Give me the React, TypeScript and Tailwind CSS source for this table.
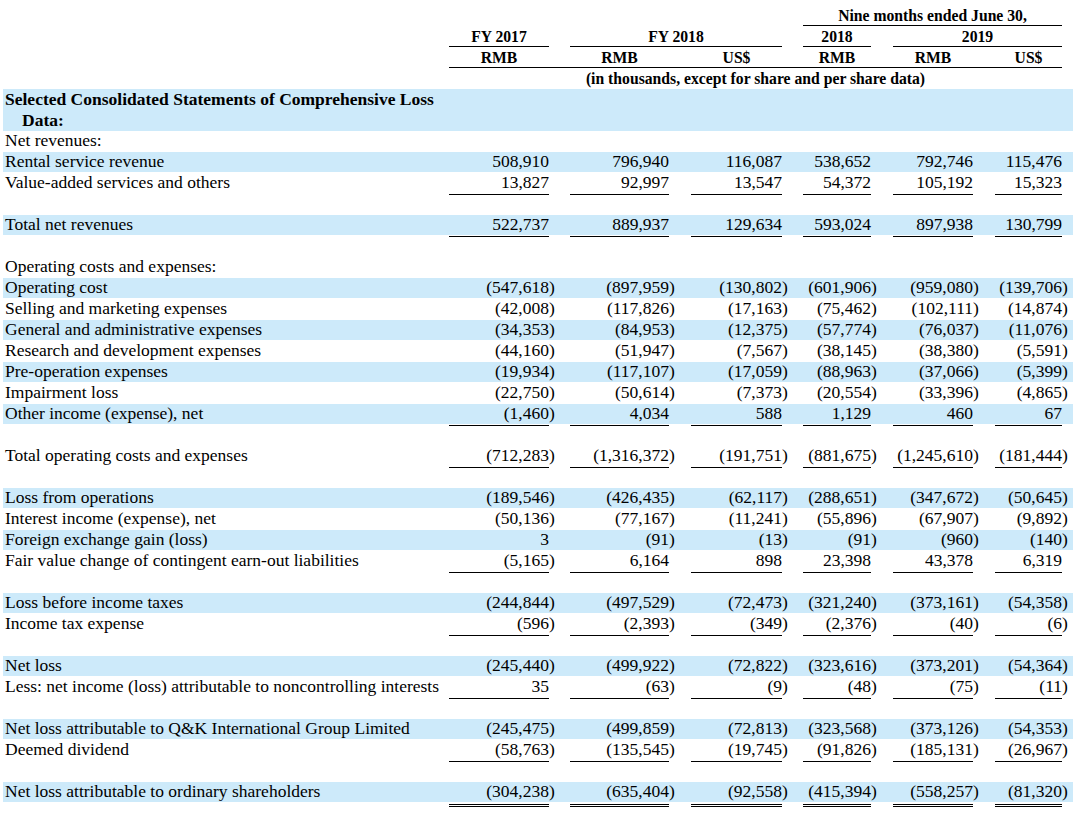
import React from "react";

type Row = {
  label: string;
  vals?: string[];
  shade?: boolean;
  full?: boolean;
  ul?: "single" | "double";
  bold?: boolean;
  indent?: boolean;
};

const rows: Row[] = [
  { label: "Selected Consolidated Statements of Comprehensive Loss", shade: true, full: true, bold: true },
  { label: "Data:", shade: true, full: true, bold: true, indent: true },
  { label: "Net revenues:" },
  { label: "Rental service revenue", shade: true, vals: ["508,910", "796,940", "116,087", "538,652", "792,746", "115,476"] },
  { label: "Value-added services and others", ul: "single", vals: ["13,827", "92,997", "13,547", "54,372", "105,192", "15,323"] },
  { label: "" },
  { label: "Total net revenues", shade: true, ul: "single", vals: ["522,737", "889,937", "129,634", "593,024", "897,938", "130,799"] },
  { label: "" },
  { label: "Operating costs and expenses:" },
  { label: "Operating cost", shade: true, vals: ["(547,618)", "(897,959)", "(130,802)", "(601,906)", "(959,080)", "(139,706)"] },
  { label: "Selling and marketing expenses", vals: ["(42,008)", "(117,826)", "(17,163)", "(75,462)", "(102,111)", "(14,874)"] },
  { label: "General and administrative expenses", shade: true, vals: ["(34,353)", "(84,953)", "(12,375)", "(57,774)", "(76,037)", "(11,076)"] },
  { label: "Research and development expenses", vals: ["(44,160)", "(51,947)", "(7,567)", "(38,145)", "(38,380)", "(5,591)"] },
  { label: "Pre-operation expenses", shade: true, vals: ["(19,934)", "(117,107)", "(17,059)", "(88,963)", "(37,066)", "(5,399)"] },
  { label: "Impairment loss", vals: ["(22,750)", "(50,614)", "(7,373)", "(20,554)", "(33,396)", "(4,865)"] },
  { label: "Other income (expense), net", shade: true, ul: "single", vals: ["(1,460)", "4,034", "588", "1,129", "460", "67"] },
  { label: "" },
  { label: "Total operating costs and expenses", ul: "single", vals: ["(712,283)", "(1,316,372)", "(191,751)", "(881,675)", "(1,245,610)", "(181,444)"] },
  { label: "" },
  { label: "Loss from operations", shade: true, vals: ["(189,546)", "(426,435)", "(62,117)", "(288,651)", "(347,672)", "(50,645)"] },
  { label: "Interest income (expense), net", vals: ["(50,136)", "(77,167)", "(11,241)", "(55,896)", "(67,907)", "(9,892)"] },
  { label: "Foreign exchange gain (loss)", shade: true, vals: ["3", "(91)", "(13)", "(91)", "(960)", "(140)"] },
  { label: "Fair value change of contingent earn-out liabilities", ul: "single", vals: ["(5,165)", "6,164", "898", "23,398", "43,378", "6,319"] },
  { label: "" },
  { label: "Loss before income taxes", shade: true, vals: ["(244,844)", "(497,529)", "(72,473)", "(321,240)", "(373,161)", "(54,358)"] },
  { label: "Income tax expense", ul: "single", vals: ["(596)", "(2,393)", "(349)", "(2,376)", "(40)", "(6)"] },
  { label: "" },
  { label: "Net loss", shade: true, vals: ["(245,440)", "(499,922)", "(72,822)", "(323,616)", "(373,201)", "(54,364)"] },
  { label: "Less: net income (loss) attributable to noncontrolling interests", ul: "single", vals: ["35", "(63)", "(9)", "(48)", "(75)", "(11)"] },
  { label: "" },
  { label: "Net loss attributable to Q&K International Group Limited", shade: true, vals: ["(245,475)", "(499,859)", "(72,813)", "(323,568)", "(373,126)", "(54,353)"] },
  { label: "Deemed dividend", ul: "single", vals: ["(58,763)", "(135,545)", "(19,745)", "(91,826)", "(185,131)", "(26,967)"] },
  { label: "" },
  { label: "Net loss attributable to ordinary shareholders", shade: true, ul: "double", vals: ["(304,238)", "(635,404)", "(92,558)", "(415,394)", "(558,257)", "(81,320)"] },
];

const cols = [
  { wrap: "flex w-[107px]", num: "w-[100px]" },
  { wrap: "flex ml-[14px] w-[106px]", num: "w-[99px]" },
  { wrap: "flex ml-[15px] w-[98px]", num: "w-[91px]" },
  { wrap: "flex ml-[14px] w-[75px]", num: "w-[68px]" },
  { wrap: "flex ml-[15px] w-[87px]", num: "w-[80px]" },
  { wrap: "flex ml-[15px] w-[74px]", num: "w-[67px]" },
];

function DataRow({ r }: { r: Row }) {
  const ulCls =
    r.ul === "double"
      ? "h-[25px] border-b-[3px] border-double border-black"
      : r.ul === "single"
      ? "h-[22px] border-b border-black"
      : "h-[20px]";
  return (
    <div className={`h-[21px] w-[1070px] ${r.shade && r.full ? "bg-[#cdeafa]" : ""}`}>
      <div className={`flex h-[20px] leading-[19px] ${r.shade && !r.full ? "bg-[#cdeafa]" : ""}`}>
        <div
          className={`w-[446px] shrink-0 whitespace-nowrap ${r.indent ? "pl-[19px]" : "pl-[2px]"} ${
            r.bold ? "font-bold" : ""
          } ${r.full ? "leading-[21px]" : ""}`}
        >
          {r.label}
        </div>
        {r.vals &&
          r.vals.map((v, i) => {
            const neg = v.endsWith(")");
            const body = neg ? v.slice(0, -1) : v;
            return (
              <div key={i} className={`${cols[i].wrap} shrink-0 self-start`}>
                <div className={`${cols[i].num} shrink-0 text-right whitespace-nowrap ${ulCls}`}>{body}</div>
                <div className="w-[7px] shrink-0 text-left">{neg ? ")" : ""}</div>
              </div>
            );
          })}
      </div>
    </div>
  );
}

export default function App() {
  return (
    <div className="w-[1080px] h-[817px] bg-white overflow-hidden text-black font-['Liberation_Serif',serif] text-[17.5px] leading-[21px]">
      <div className="ml-[3px] pt-[5px]">
        <div className="text-[15.7px] font-bold">
          {/* Header row A */}
          <div className="flex h-[21px]">
            <div className="w-[446px] shrink-0" />
            <div className="w-[354px] shrink-0" />
            <div className="w-[259px] shrink-0 border-b border-black text-center whitespace-nowrap">
              Nine months ended June 30,
            </div>
          </div>
          {/* Header row B */}
          <div className="flex h-[21px]">
            <div className="w-[446px] shrink-0" />
            <div className="w-[100px] shrink-0 border-b border-black text-center">FY 2017</div>
            <div className="w-[21px] shrink-0" />
            <div className="w-[212px] shrink-0 border-b border-black text-center">FY 2018</div>
            <div className="w-[21px] shrink-0" />
            <div className="w-[68px] shrink-0 border-b border-black text-center">2018</div>
            <div className="w-[22px] shrink-0" />
            <div className="w-[169px] shrink-0 border-b border-black text-center">2019</div>
          </div>
          {/* Header row C */}
          <div className="flex h-[21px]">
            <div className="w-[446px] shrink-0" />
            <div className="flex w-[613px] shrink-0 border-b border-black">
              <div className="w-[100px] shrink-0 text-center">RMB</div>
              <div className="w-[21px] shrink-0" />
              <div className="w-[99px] shrink-0 text-center">RMB</div>
              <div className="w-[22px] shrink-0" />
              <div className="w-[91px] shrink-0 text-center">US$</div>
              <div className="w-[21px] shrink-0" />
              <div className="w-[68px] shrink-0 text-center">RMB</div>
              <div className="w-[22px] shrink-0" />
              <div className="w-[80px] shrink-0 text-center">RMB</div>
              <div className="w-[22px] shrink-0" />
              <div className="w-[67px] shrink-0 text-center">US$</div>
            </div>
          </div>
          {/* Header row D */}
          <div className="flex h-[21px]">
            <div className="w-[446px] shrink-0" />
            <div className="w-[613px] shrink-0 text-center whitespace-nowrap">
              (in thousands, except for share and per share data)
            </div>
          </div>
        </div>
        {rows.map((r, i) => (
          <DataRow key={i} r={r} />
        ))}
      </div>
    </div>
  );
}
